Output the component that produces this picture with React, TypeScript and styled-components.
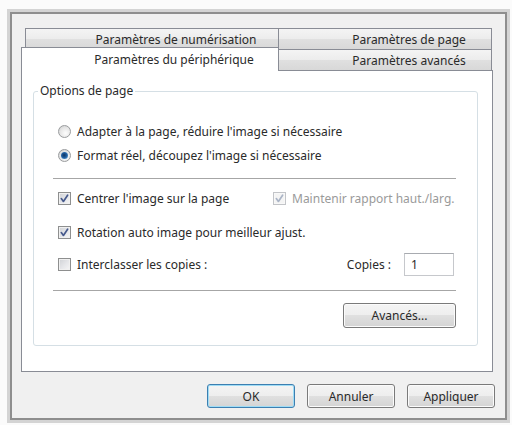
import React from "react";
import styled, { createGlobalStyle } from "styled-components";

const GlobalStyle = createGlobalStyle`
  html, body {
    margin: 0;
    background: #fbfbfb;
  }
  body {
    font-family: "Noto Sans", "Open Sans", Arial, sans-serif;
    font-size: 12px;
    color: #2a2a2a;
  }
`;

function CheckBox({ checked, disabled }: { checked?: boolean; disabled?: boolean }) {
  return (
    <Box $disabled={disabled}>
      {checked && (
        <svg width="11" height="11" viewBox="0 0 11 11">
          <path
            d="M2.3 5.6 L4.4 8.4 L8.6 2.2"
            fill="none"
            stroke={disabled ? "#aab4c6" : "#46598c"}
            strokeWidth="1.7"
            strokeLinecap="round"
            strokeLinejoin="round"
          />
        </svg>
      )}
    </Box>
  );
}

function Radio({ checked }: { checked?: boolean }) {
  return <RadioDot>{checked && <RadioInner />}</RadioDot>;
}

function App() {
  return (
    <React.Fragment>
      <GlobalStyle />
      <Frame>
        <Dialog>
          <TabStrip>
            <TabRow $inset={4}>
              <Tab $width={254}>Paramètres de numérisation</Tab>
              <Tab $width={214}>Paramètres de page</Tab>
            </TabRow>
            <TabRow $inset={0}>
              <Tab $width={258} $selected>
                Paramètres du périphérique
              </Tab>
              <Tab $width={214}>Paramètres avancés</Tab>
            </TabRow>
          </TabStrip>

          <Panel>
            <Group>
              <Legend>Options de page</Legend>
              <GroupBody>
                <Row $top={22}>
                  <Option>
                    <Radio />
                    Adapter à la page, réduire l'image si nécessaire
                  </Option>
                </Row>
                <Row $top={4}>
                  <Option>
                    <Radio checked />
                    Format réel, découpez l'image si nécessaire
                  </Option>
                </Row>

                <Divider $top={13} />

                <Row $top={9}>
                  <Cell $width={215}>
                    <Option>
                      <CheckBox checked />
                      Centrer l'image sur la page
                    </Option>
                  </Cell>
                  <Option $disabled>
                    <CheckBox checked disabled />
                    Maintenir rapport haut./larg.
                  </Option>
                </Row>
                <Row $top={14}>
                  <Option>
                    <CheckBox checked />
                    Rotation auto image pour meilleur ajust.
                  </Option>
                </Row>
                <Row $top={10} $height={24}>
                  <Option>
                    <CheckBox />
                    Interclasser les copies :
                  </Option>
                  <Copies>
                    Copies :
                    <NumberInput defaultValue="1" />
                  </Copies>
                </Row>

                <Divider $top={14} />

                <ButtonRow>
                  <Button $width={113} $height={25}>
                    Avancés...
                  </Button>
                </ButtonRow>
              </GroupBody>
            </Group>
          </Panel>

          <Footer>
            <Button $width={88} $height={24} $default>
              OK
            </Button>
            <Button $width={88} $height={24}>
              Annuler
            </Button>
            <Button $width={88} $height={24}>
              Appliquer
            </Button>
          </Footer>
        </Dialog>
      </Frame>
    </React.Fragment>
  );
}

export const Frame = styled.div`
  margin: 9px 0 0 7px;
  width: 503px;
  height: 414px;
  box-sizing: border-box;
  border: 3px solid #d4d4d4;
`;

export const Dialog = styled.div`
  height: 100%;
  box-sizing: border-box;
  border: 2px solid #8e8e8e;
  background: #f0f0f0;
  padding: 14px 12px 10px 9px;
  display: flex;
  flex-direction: column;
`;

export const TabStrip = styled.div`
  display: flex;
  flex-direction: column;
  height: 42px;
`;

export const TabRow = styled.div<{ $inset: number }>`
  display: flex;
  align-items: flex-end;
  height: 21px;
  margin-left: ${(p) => p.$inset}px;
`;

export const Tab = styled.div<{ $width: number; $selected?: boolean }>`
  width: ${(p) => p.$width}px;
  height: ${(p) => (p.$selected ? 24 : 21)}px;
  box-sizing: border-box;
  display: flex;
  align-items: center;
  justify-content: center;
  padding-left: 48px;
  border: 1px solid #898c95;
  border-bottom: none;
  background: ${(p) =>
    p.$selected ? "#ffffff" : "linear-gradient(#f4f4f4 0%, #ececec 50%, #e0e0e0 51%, #d8d8d8 100%)"};
  color: #2a2a2a;
  white-space: nowrap;
  position: ${(p) => (p.$selected ? "relative" : "static")};
  z-index: ${(p) => (p.$selected ? 1 : "auto")};
  margin-bottom: ${(p) => (p.$selected ? -1 : 0)}px;

  & + & {
    margin-left: -1px;
  }
`;

export const Panel = styled.div`
  height: 302px;
  box-sizing: border-box;
  border: 1px solid #898c95;
  background: #ffffff;
  padding: 12px 14px 0 11px;
`;

export const Group = styled.fieldset`
  margin: 0;
  padding: 0;
  min-width: 0;
  height: 263px;
  box-sizing: border-box;
  border: 1px solid #d5dfe5;
  border-radius: 3px;
`;

export const Legend = styled.legend`
  margin-left: 4px;
  padding: 0 2px;
  line-height: 16px;
  color: #2a2a2a;
`;

export const GroupBody = styled.div`
  padding: 0 21px 0 19px;
  display: flex;
  flex-direction: column;
`;

export const Row = styled.div<{ $top: number; $height?: number }>`
  display: flex;
  align-items: center;
  height: ${(p) => p.$height ?? 20}px;
  margin-top: ${(p) => p.$top}px;
  padding-left: 5px;
  white-space: nowrap;
`;

export const Cell = styled.div<{ $width: number }>`
  width: ${(p) => p.$width}px;
  display: flex;
  align-items: center;
`;

export const Option = styled.label<{ $disabled?: boolean }>`
  display: inline-flex;
  align-items: center;
  gap: 6px;
  color: ${(p) => (p.$disabled ? "#9a9a9a" : "#2a2a2a")};
`;

export const Box = styled.span<{ $disabled?: boolean }>`
  width: 13px;
  height: 13px;
  box-sizing: border-box;
  display: inline-flex;
  align-items: center;
  justify-content: center;
  border: 1px solid ${(p) => (p.$disabled ? "#c2c4c8" : "#8e8f8f")};
  background: ${(p) =>
    p.$disabled ? "#f4f4f4" : "linear-gradient(135deg, #cfd1d5 0%, #e6e7ea 55%, #f6f6f6 100%)"};
  box-shadow: inset 0 0 0 1px ${(p) => (p.$disabled ? "#f8f8f8" : "#f0f0f0")};
  flex-shrink: 0;
`;

export const RadioDot = styled.span`
  width: 13px;
  height: 13px;
  box-sizing: border-box;
  border-radius: 50%;
  display: inline-flex;
  align-items: center;
  justify-content: center;
  border: 1px solid #9a9c9e;
  background: radial-gradient(circle at 60% 65%, #fdfdfd 0%, #e6e6e6 55%, #c8c9ca 100%);
  flex-shrink: 0;
`;

export const RadioInner = styled.span`
  width: 7px;
  height: 7px;
  border-radius: 50%;
  background: radial-gradient(circle at 45% 45%, #0d3460 0%, #1f5c9e 45%, #73b8e6 100%);
`;

export const Divider = styled.div<{ $top: number }>`
  height: 0;
  margin-top: ${(p) => p.$top}px;
  border-top: 1px solid #a6a6a6;
`;

export const Copies = styled.div`
  margin-left: auto;
  margin-right: 2px;
  display: flex;
  align-items: center;
  gap: 13px;
`;

export const NumberInput = styled.input`
  width: 50px;
  height: 23px;
  box-sizing: border-box;
  border: 1px solid #c6c8cc;
  border-top-color: #a8abb0;
  padding: 0 6px;
  font-family: inherit;
  font-size: 12px;
  color: #2a2a2a;
  background: #ffffff;
  outline: none;
`;

export const ButtonRow = styled.div`
  display: flex;
  justify-content: flex-end;
  margin-top: 12px;
`;

export const Footer = styled.div`
  display: flex;
  justify-content: flex-end;
  gap: 12px;
  margin-top: 12px;
  margin-right: -2px;
`;

export const Button = styled.button<{ $width: number; $height: number; $default?: boolean }>`
  width: ${(p) => p.$width}px;
  height: ${(p) => p.$height}px;
  box-sizing: border-box;
  padding: 0;
  border: 1px solid ${(p) => (p.$default ? "#3c7fb1" : "#7a7a7a")};
  border-radius: 3px;
  background: linear-gradient(#f4f4f4 0%, #eeeeee 49%, #e0e0e0 50%, #d4d4d4 100%);
  box-shadow: inset 0 0 0 1px ${(p) => (p.$default ? "#9fdcf5" : "#fbfbfb")};
  font-family: inherit;
  font-size: 12px;
  color: #2a2a2a;
`;

export default App;
